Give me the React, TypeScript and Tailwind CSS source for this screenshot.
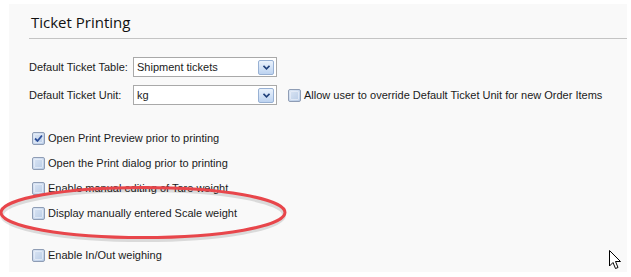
import React from 'react';

const Checkbox: React.FC<{ checked?: boolean }> = ({ checked }) => (
  <span className="relative flex h-[13px] w-[13px] shrink-0 items-center justify-center rounded-[2px] border border-[#8f9db5] bg-gradient-to-br from-[#dce6f4] to-[#b7cbe6]">
    <span className="absolute inset-[1px] rounded-[1px] border border-[#e9f0fa]/70" />
    {checked && (
      <svg width="9" height="9" viewBox="0 0 9 9" className="relative">
        <path d="M1 4.5 L3.5 7 L8 1.5" fill="none" stroke="#2d4f9a" strokeWidth="1.8" />
      </svg>
    )}
  </span>
);

const Select: React.FC<{ value: string }> = ({ value }) => (
  <div className="flex h-[20px] w-[144px] items-center justify-between border border-[#a9a9a9] bg-white pl-[3px] pr-[2px]">
    <span>{value}</span>
    <span className="flex h-[15px] w-[16px] items-center justify-center rounded-[2px] border border-[#98b1d4] bg-gradient-to-b from-[#eaf2fc] to-[#bdd3f0]">
      <svg width="7" height="5" viewBox="0 0 7 5">
        <path d="M0.5 0.8 L3.5 3.8 L6.5 0.8" fill="none" stroke="#20407a" strokeWidth="1.6" />
      </svg>
    </span>
  </div>
);

const CheckRow: React.FC<{ label: string; checked?: boolean; className?: string }> = ({ label, checked, className }) => (
  <div className={`flex h-[13px] items-center gap-[3px] leading-[13px] ${className ?? ''}`}>
    <Checkbox checked={checked} />
    <span>{label}</span>
  </div>
);

export default function App() {
  return (
    <div className="h-[277px] w-[631px] overflow-hidden bg-white pt-[4px] pl-[9px] pr-[4px] font-['Liberation_Sans',Arial,sans-serif] text-[11px] leading-[14px] text-[#1b1b1b]">
      <div className="relative h-[268px] bg-[#f9f9f9] pl-[20px]">
        <div className="border-b border-[#c4c4c4] pt-[7px] pb-[5px] pl-[2px]">
          <h2 className="font-['Open_Sans',sans-serif] text-[15px] leading-[22px] text-[#111]">Ticket Printing</h2>
        </div>

        <div className="mt-[18px] flex flex-col gap-[8px]">
          <div className="flex items-center">
            <span className="w-[104px]">Default Ticket Table:</span>
            <Select value="Shipment tickets" />
          </div>
          <div className="flex items-center">
            <span className="w-[104px]">Default Ticket Unit:</span>
            <Select value="kg" />
            <CheckRow className="ml-[11px]" label="Allow user to override Default Ticket Unit for new Order Items" />
          </div>
        </div>

        <div className="mt-[27px] flex flex-col gap-[12px] pl-[3px]">
          <CheckRow checked label="Open Print Preview prior to printing" />
          <CheckRow label="Open the Print dialog prior to printing" />
          <CheckRow label="Enable manual editing of Tare weight" />
          <CheckRow label="Display manually entered Scale weight" />
          <CheckRow className="mt-[17px]" label="Enable In/Out weighing" />
        </div>

        {/* red highlight ellipse */}
        <svg className="pointer-events-none absolute left-[-9px] top-[180px]" width="300" height="64" viewBox="0 0 300 64">
          <ellipse cx="143" cy="31" rx="141" ry="25" fill="none" stroke="#000" strokeOpacity="0.12" strokeWidth="4" />
          <ellipse cx="143" cy="28.5" rx="142" ry="25" fill="none" stroke="#e8464b" strokeWidth="3" />
        </svg>

        {/* mouse cursor */}
        <svg className="pointer-events-none absolute left-[600px] top-[246px]" width="13" height="20" viewBox="0 0 13 20">
          <path d="M0.5 0.5 L0.5 16 L4 12.5 L6.5 18.5 L9 17.5 L6.5 11.5 L11.5 11.5 Z" fill="#fff" stroke="#000" strokeWidth="1" strokeLinejoin="miter" />
        </svg>
      </div>
    </div>
  );
}
